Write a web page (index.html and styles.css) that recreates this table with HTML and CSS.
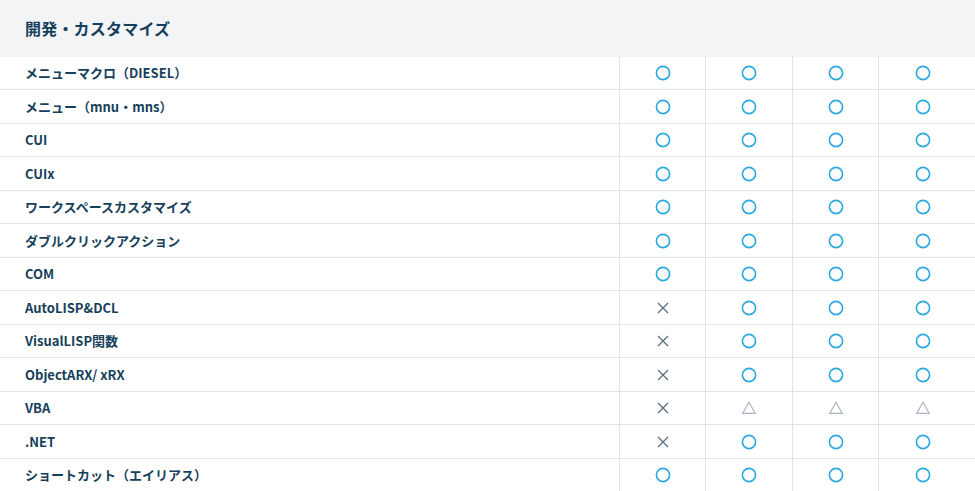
FILE: index.html
```html
<!DOCTYPE html>
<html lang="ja">
<head>
<meta charset="utf-8">
<link rel="stylesheet" href="styles.css">
</head>
<body>
<svg width="0" height="0" class="defs">
  <defs>
    <symbol id="o" viewBox="0 0 16 16"><circle cx="8" cy="8" r="6.6" fill="none" stroke="currentColor" stroke-width="1.6"/></symbol>
    <symbol id="x" viewBox="0 0 16 16"><path d="M3 3 L13 13 M13 3 L3 13" fill="none" stroke="currentColor" stroke-width="1.3"/></symbol>
    <symbol id="t" viewBox="0 0 16 16"><path d="M8 2.2 L14.2 13.3 H1.8 Z" fill="none" stroke="currentColor" stroke-width="1.2" stroke-linejoin="miter"/></symbol>
  </defs>
</svg>
<section class="table">
  <h2 class="title">開発・カスタマイズ</h2>
  <div class="rows" id="rows"></div>
</section>
<script src="app.js"></script>
</body>
</html>
```
FILE: app.js
```js
const data = [
  ["メニューマクロ（DIESEL）", "oooo"],
  ["メニュー（mnu・mns）", "oooo"],
  ["CUI", "oooo"],
  ["CUIx", "oooo"],
  ["ワークスペースカスタマイズ", "oooo"],
  ["ダブルクリックアクション", "oooo"],
  ["COM", "oooo"],
  ["AutoLISP&DCL", "xooo"],
  ["VisualLISP関数", "xooo"],
  ["ObjectARX/ xRX", "xooo"],
  ["VBA", "xttt"],
  [".NET", "xooo"],
  ["ショートカット（エイリアス）", "oooo"]
];
const rows = document.getElementById("rows");
for (const [label, marks] of data) {
  const row = document.createElement("div");
  row.className = "row";
  const name = document.createElement("div");
  name.className = "name";
  name.textContent = label;
  row.appendChild(name);
  for (const m of marks) {
    const c = document.createElement("div");
    c.className = "cell mark-" + m;
    c.innerHTML = '<svg class="icon"><use href="#' + m + '"/></svg>';
    row.appendChild(c);
  }
  const pad = document.createElement("div");
  pad.className = "pad";
  row.appendChild(pad);
  rows.appendChild(row);
}
```
FILE: styles.css
```css
html, body {
  margin: 0;
  padding: 0;
  background: #ffffff;
}
body {
  font-family: "Noto Sans CJK JP", "Noto Sans", sans-serif;
  color: #173f5b;
  width: 975px;
  overflow: hidden;
}
.defs {
  position: absolute;
}
.table {
  width: 975px;
}
.title {
  margin: 0;
  height: 56.5px;
  box-sizing: border-box;
  background: #f3f4f6;
  font-size: 16px;
  font-weight: 700;
  padding-left: 25px;
  display: flex;
  align-items: center;
  padding-bottom: 1px;
  letter-spacing: 0.2px;
  color: #173f5b;
}
.row {
  display: grid;
  grid-template-columns: 619px 86px 87px 86px 88px 1fr;
  height: 33.5px;
  box-sizing: border-box;
  border-bottom: 1px solid #dfe4e8;
}
.name {
  display: flex;
  align-items: center;
  padding-left: 25px;
  font-size: 13px;
  font-weight: 700;
  color: #173f5b;
}
.cell {
  border-left: 1px solid #dfe4e8;
  display: flex;
  align-items: center;
  justify-content: center;
  padding-top: 1px;
}
.icon {
  width: 16px;
  height: 16px;
}
.mark-o { color: #2aa8e0; }
.mark-x { color: #5b6e7e; }
.mark-t { color: #aab3c1; }
.pad {
  border-left: 0;
}
```
